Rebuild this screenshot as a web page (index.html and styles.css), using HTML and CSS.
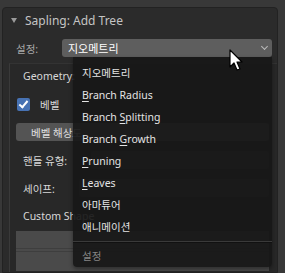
FILE: index.html
```html
<!DOCTYPE html>
<html lang="ko">
<head>
    <meta charset="UTF-8">
    <title>Sapling: Add Tree</title>
    <link rel="stylesheet" href="styles.css">
</head>
<body>
    <div class="panel">
        <div class="panel-head"><span class="arrow"></span>Sapling: Add Tree</div>

        <div class="prop-row">
            <span class="prop-label">설정:</span>
            <div class="dropdown active">지오메트리<span class="chevron"></span></div>
        </div>

        <div class="box">
            <div class="row">Geometry:</div>
            <div class="row check-row"><span class="checkbox"></span>베벨</div>
            <div class="row"><div class="slider">베벨 해상도</div></div>
            <div class="row">핸들 유형:<div class="dropdown faint"></div></div>
            <div class="row">세이프:<div class="dropdown faint"></div></div>
            <div class="row">Custom Shape</div>
            <div class="curve">
                <div class="grid-line"></div>
                <div class="grid-line"></div>
            </div>
            <div class="slider value">0.25</div>
        </div>
    </div>

    <!-- open dropdown menu -->
    <div class="menu">
        <div class="item">지오메트리</div>
        <div class="item"><u>B</u>ranch Radius</div>
        <div class="item">Branch <u>S</u>plitting</div>
        <div class="item">Branch <u>G</u>rowth</div>
        <div class="item"><u>P</u>runing</div>
        <div class="item"><u>L</u>eaves</div>
        <div class="item">아마튜어</div>
        <div class="item">애니메이션</div>
        <div class="sep"></div>
        <div class="item title">설정</div>
    </div>

    <svg class="cursor" width="16" height="24" viewBox="0 0 16 24">
        <path d="M1 1 L1 18 L5 14 L8 21 L11 20 L8 13 L13 13 Z" fill="#fff" stroke="#000" stroke-width="1.2" stroke-linejoin="round"/>
    </svg>
</body>
</html>
```

FILE: styles.css
```css
body {
    margin: 0;
    height: 273px;
    overflow: hidden;
    background: #383838;
    color: #d8d8d8;
    font-family: "Noto Sans", "Noto Sans CJK KR", sans-serif;
    font-size: 10.5px;
    padding: 7px 7px 0 2px;
    box-sizing: border-box;
    position: relative;
}

.panel {
    background: #2b2b2b;
    border: 1px solid #222;
    border-radius: 4px 4px 0 0;
    height: 100%;
    box-sizing: border-box;
    overflow: hidden;
}

.panel-head {
    height: 25px;
    display: flex;
    align-items: center;
    padding-left: 8px;
    font-size: 12px;
    color: #c4c4c4;
}

.arrow {
    width: 0;
    height: 0;
    border-left: 3px solid transparent;
    border-right: 3px solid transparent;
    border-top: 5px solid #9a9a9a;
    margin-right: 8px;
}

.prop-row {
    display: flex;
    align-items: center;
    height: 18px;
    margin-top: 6px;
    padding-right: 5px;
}

.prop-label {
    width: 59px;
    padding-left: 13px;
    color: #a8a8a8;
    box-sizing: border-box;
}

.dropdown {
    flex: 1;
    height: 18px;
    border-radius: 3px;
    background: #545454;
    display: flex;
    align-items: center;
    padding-left: 6px;
    position: relative;
    color: #fff;
    font-size: 11px;
}

.dropdown.active {
    background: #5e5e5e;
}

.chevron {
    position: absolute;
    right: 5px;
    top: 5px;
    width: 4px;
    height: 4px;
    border-right: 1.5px solid #bbb;
    border-bottom: 1.5px solid #bbb;
    transform: rotate(45deg);
}

.box {
    margin: 6px 0 0 6px;
    border-left: 1px solid #3a3a3a;
    border-top: 1px solid #333;
    background: #282828;
    padding: 2px 8px 0 6px;
    height: 220px;
}

.row {
    height: 20px;
    margin-bottom: 8px;
    display: flex;
    align-items: center;
    padding-left: 7px;
    color: #d8d8d8;
}

.row .dropdown {
    margin-left: 24px;
    flex: 1;
}

.dropdown.faint {
    background: #3c3c3c;
}

.check-row {
    padding-left: 1px;
    gap: 10px;
}

.checkbox {
    width: 13px;
    height: 13px;
    border-radius: 2px;
    background: #4772b3;
    position: relative;
}

.checkbox::after {
    content: "";
    position: absolute;
    left: 4px;
    top: 1px;
    width: 3px;
    height: 7px;
    border-right: 2px solid #fff;
    border-bottom: 2px solid #fff;
    transform: rotate(40deg);
}

.row .slider {
    margin-left: -7px;
}

.slider {
    flex: 1;
    height: 18px;
    border-radius: 3px;
    background: #545454;
    display: flex;
    align-items: center;
    padding-left: 15px;
    color: #e0e0e0;
}

.curve {
    margin-top: -3px;
    height: 40px;
    background: #4a4a4a;
    padding-top: 17px;
    box-sizing: border-box;
}

.grid-line {
    height: 1px;
    background: #3e3e3e;
    margin-bottom: 2px;
}

.slider.value {
    margin-top: 2px;
    justify-content: center;
    align-items: flex-start;
    padding-left: 0;
    background: #5a5a5a;
    line-height: 12px;
}

.menu {
    position: absolute;
    left: 73px;
    top: 57px;
    width: 199px;
    padding-top: 5px;
    background: rgba(24, 24, 24, 0.93);
    border-radius: 0 0 4px 4px;
    box-shadow: 0 2px 4px rgba(0, 0, 0, 0.4);
    font-size: 10.5px;
}

.item {
    height: 22px;
    line-height: 22px;
    padding-left: 9px;
    color: #e4e4e4;
    white-space: nowrap;
}

.item u {
    text-underline-offset: 2px;
}

.sep {
    height: 1px;
    margin: 3px 0 2px;
    background: #3a3a3a;
    border-bottom: 1px solid #111;
}

.item.title {
    color: #858585;
}

.cursor {
    position: absolute;
    left: 229px;
    top: 49px;
}
```
